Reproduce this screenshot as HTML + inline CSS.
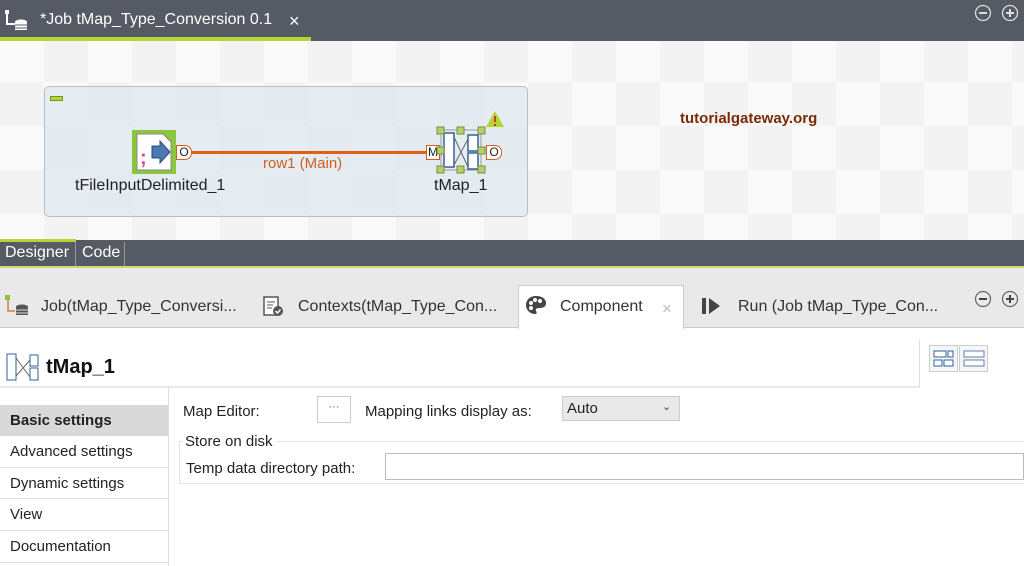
<!DOCTYPE html>
<html><head><meta charset="utf-8"><style>
*{margin:0;padding:0;box-sizing:border-box}
body{width:1024px;height:566px;overflow:hidden;background:#fff;font-family:"Liberation Sans",sans-serif;font-size:15px;color:#222;position:relative}
.a{position:absolute}
.t{position:absolute;white-space:nowrap}
</style></head><body>
<!-- top bar -->
<div class="a" style="left:0;top:0;width:1024px;height:41px;background:#555a65"></div>
<div class="a" style="left:0;top:37px;width:311px;height:4px;background:#b6d432"></div>
<svg class="a" style="left:4px;top:10px" width="26" height="22"><rect x="1" y="0" width="4" height="4" fill="#fff"/><path d="M3 4v10h8" stroke="#fff" stroke-width="2" fill="none"/><ellipse cx="17" cy="12" rx="6" ry="2.5" fill="#fff"/><rect x="11" y="12" width="12" height="8" fill="#fff"/><path d="M11 15h12M11 18h12" stroke="#555a65"/></svg>
<div class="t" style="left:40px;top:11px;color:#fff;font-size:16px">*Job tMap_Type_Conversion 0.1</div>
<div class="t" style="left:289px;top:11px;color:#fff;font-size:18px">×</div>
<svg class="a" style="left:974px;top:4px" width="46" height="18"><circle cx="9" cy="9" r="7.5" fill="none" stroke="#ddd" stroke-width="1.3"/><path d="M5 9h8" stroke="#ddd" stroke-width="2"/><circle cx="36" cy="9" r="7.5" fill="none" stroke="#ddd" stroke-width="1.3"/><path d="M32 9h8M36 5v8" stroke="#ddd" stroke-width="2"/></svg>
<!-- canvas -->
<div class="a" style="left:0;top:41px;width:1024px;height:199px;background-color:#fafafa;background-image:conic-gradient(#f3f3f3 25%,transparent 0 50%,#f3f3f3 0 75%,transparent 0);background-size:88px 88px;background-position:-44px 41px"></div>
<div class="a" style="left:44px;top:86px;width:484px;height:131px;background:rgba(220,230,238,.7);border:1px solid #b4c0cc;border-radius:5px"></div>
<div class="a" style="left:50px;top:96px;width:13px;height:5px;background:#b6d432;border:1px solid #7a9020"></div>
<!-- file input icon -->
<div class="a" style="left:132px;top:130px;width:44px;height:44px;background:#8cc63f"></div>
<svg class="a" style="left:132px;top:130px" width="60" height="44"><path d="M5 4h26l8 8v28H5z" fill="#fff" stroke="#888"/><text x="8" y="34" fill="#e040a0" font-size="20" font-weight="bold" font-family="Liberation Sans">;</text><path d="M20 16h8v-5l10 11-10 11v-5h-8z" fill="#4a7ab0" stroke="#2a4a80"/></svg>
<div class="a" style="left:176px;top:145px;width:16px;height:15px;background:#fff;border:1px solid #d06020;border-radius:0 7px 7px 0;font-size:12px;text-align:center;line-height:13px">O</div>
<div class="a" style="left:192px;top:151px;width:236px;height:3px;background:#e0601a"></div>
<div class="t" style="left:263px;top:155px;color:#d06020;font-size:15px">row1 (Main)</div>
<div class="t" style="left:75px;top:177px;font-size:16px">tFileInputDelimited_1</div>
<!-- tMap -->
<div class="a" style="left:426px;top:145px;width:14px;height:15px;background:#fff;border:1px solid #d06020;font-size:12px;text-align:center;line-height:13px">M</div>
<svg class="a" style="left:436px;top:125px" width="60" height="50"><rect x="5" y="5" width="40" height="40" fill="none" stroke="#999"/><rect x="8" y="8" width="10" height="34" fill="#fff" stroke="#3060a0" stroke-width="1.5"/><rect x="32" y="10" width="10" height="16" fill="#fff" stroke="#3060a0" stroke-width="1.5"/><rect x="32" y="28" width="10" height="16" fill="#fff" stroke="#3060a0" stroke-width="1.5"/><path d="M18 12L32 42M18 40L32 14" stroke="#666"/><g fill="#b6d070" stroke="#7a9030"><rect x="1" y="2" width="7" height="7"/><rect x="21" y="2" width="7" height="7"/><rect x="42" y="2" width="7" height="7"/><rect x="1" y="22" width="7" height="7"/><rect x="42" y="22" width="7" height="7"/><rect x="1" y="41" width="7" height="7"/><rect x="21" y="41" width="7" height="7"/><rect x="42" y="41" width="7" height="7"/></g></svg>
<div class="a" style="left:486px;top:145px;width:16px;height:15px;background:#fff;border:1px solid #d06020;border-radius:0 7px 7px 0;font-size:12px;text-align:center;line-height:13px">O</div>
<svg class="a" style="left:485px;top:110px" width="20" height="18"><path d="M10 1L19 17H1z" fill="#b6d432"/><path d="M10 6v6M10 14v2" stroke="#c04020" stroke-width="2"/></svg>
<div class="t" style="left:434px;top:177px;font-size:16px">tMap_1</div>
<div class="t" style="left:680px;top:110px;color:#7a2a0a;font-size:15px;font-weight:bold">tutorialgateway.org</div>
<!-- designer bar -->
<div class="a" style="left:0;top:240px;width:1024px;height:28px;background:#555a65"></div>
<div class="a" style="left:0;top:239px;width:76px;height:3px;background:#b6d432"></div>
<div class="a" style="left:0;top:242px;width:76px;height:24px;border-right:1px solid #999"></div>
<div class="t" style="left:5px;top:244px;color:#fff;font-size:16px">Designer</div>
<div class="a" style="left:77px;top:242px;width:48px;height:24px;border-right:1px solid #999"></div>
<div class="t" style="left:82px;top:244px;color:#fff;font-size:16px">Code</div>
<div class="a" style="left:0;top:266px;width:1024px;height:2px;background:#c8dc70"></div>
<!-- views tabs -->
<div class="a" style="left:0;top:268px;width:1024px;height:60px;background:#e9e9e9;border-bottom:1px solid #ccc"></div>
<svg class="a" style="left:5px;top:295px" width="26" height="22"><rect x="0" y="0" width="5" height="5" fill="#8cc63f"/><path d="M3 5v11h7" stroke="#d08040" stroke-width="1.5" fill="none"/><ellipse cx="17" cy="12" rx="6" ry="2.5" fill="#555"/><rect x="11" y="12" width="12" height="8" fill="#555"/><path d="M11 15h12M11 18h12" stroke="#ddd"/></svg>
<div class="t" style="left:41px;top:298px;color:#333;font-size:16px">Job(tMap_Type_Conversi...</div>
<svg class="a" style="left:262px;top:294px" width="24" height="24"><rect x="2" y="3" width="14" height="18" fill="#fff" stroke="#555" stroke-width="1.5"/><path d="M5 8h8M5 11h6M5 14h5" stroke="#555"/><circle cx="16" cy="17" r="5" fill="#555"/><path d="M13.5 17l2 2 3-3.5" stroke="#fff" stroke-width="1.5" fill="none"/></svg>
<div class="t" style="left:298px;top:298px;color:#333;font-size:16px">Contexts(tMap_Type_Con...</div>
<div class="a" style="left:518px;top:285px;width:166px;height:44px;background:#fff;border:1px solid #ccc;border-bottom:none"></div>
<svg class="a" style="left:525px;top:295px" width="22" height="20"><path d="M11 1C4 1 1 6 1 10c0 5 4 9 9 9 2 0 2-2 1-3-1-2 1-3 3-3 4 0 7-1 7-5S17 1 11 1z" fill="#444"/><circle cx="6" cy="8" r="2" fill="#fff"/><circle cx="10" cy="5" r="2" fill="#fff"/><circle cx="15" cy="6" r="2" fill="#fff"/><circle cx="6" cy="13" r="2" fill="#fff"/></svg>
<div class="t" style="left:560px;top:298px;color:#333;font-size:16px">Component</div>
<div class="t" style="left:662px;top:299px;color:#bbb;font-size:17px">×</div>
<svg class="a" style="left:700px;top:297px" width="22" height="18"><rect x="2" y="1" width="4" height="16" fill="#444"/><path d="M9 1l11 8-11 8z" fill="#444"/></svg>
<div class="t" style="left:738px;top:298px;color:#333;font-size:16px">Run (Job tMap_Type_Con...</div>
<svg class="a" style="left:974px;top:290px" width="46" height="18"><circle cx="9" cy="9" r="7.5" fill="none" stroke="#666" stroke-width="1.2"/><path d="M5 9h8" stroke="#444" stroke-width="2"/><circle cx="36" cy="9" r="7.5" fill="none" stroke="#666" stroke-width="1.2"/><path d="M32 9h8M36 5v8" stroke="#444" stroke-width="2"/></svg>
<!-- header -->
<div class="a" style="left:0;top:340px;width:920px;height:48px;border-right:1px solid #ddd;border-bottom:2px solid #e4eaf0"></div>
<svg class="a" style="left:6px;top:352px" width="34" height="30"><rect x="1" y="2" width="9" height="26" fill="#fff" stroke="#3060a0"/><rect x="24" y="3" width="8" height="11" fill="#fff" stroke="#3060a0"/><rect x="24" y="16" width="8" height="12" fill="#fff" stroke="#3060a0"/><path d="M10 6L24 25M10 24L24 8" stroke="#666"/></svg>
<div class="t" style="left:46px;top:356px;font-size:20px;font-weight:bold;color:#111">tMap_1</div>
<div class="a" style="left:929px;top:345px;width:29px;height:27px;border:1px solid #ccc;background:#f6f6f6"></div>
<svg class="a" style="left:933px;top:349px" width="22" height="20"><rect x="1" y="2" width="12" height="6" fill="#fff" stroke="#3060a0"/><rect x="15" y="2" width="5" height="6" fill="#fff" stroke="#3060a0"/><rect x="1" y="11" width="8" height="6" fill="#fff" stroke="#3060a0"/><rect x="11" y="11" width="9" height="6" fill="#fff" stroke="#3060a0"/></svg>
<div class="a" style="left:959px;top:345px;width:29px;height:27px;border:1px solid #ccc;background:#f6f6f6"></div>
<svg class="a" style="left:963px;top:349px" width="22" height="20"><rect x="1" y="2" width="20" height="6" fill="#fff" stroke="#6080b0"/><rect x="1" y="11" width="20" height="6" fill="#fff" stroke="#6080b0"/></svg>
<!-- left list -->
<div class="a" style="left:168px;top:388px;width:1px;height:178px;background:#ddd"></div>
<div class="a" style="left:0;top:405px;width:168px;height:31px;background:#d9d9d9"></div>
<div class="t" style="left:10px;top:412px;font-weight:bold;font-size:15px">Basic settings</div>
<div class="a" style="left:0;top:467px;width:168px;height:1px;background:#e0e0e0"></div>
<div class="a" style="left:0;top:498px;width:168px;height:1px;background:#e0e0e0"></div>
<div class="a" style="left:0;top:530px;width:168px;height:1px;background:#e0e0e0"></div>
<div class="a" style="left:0;top:562px;width:168px;height:1px;background:#e0e0e0"></div>
<div class="t" style="left:10px;top:443px">Advanced settings</div>
<div class="t" style="left:10px;top:475px">Dynamic settings</div>
<div class="t" style="left:10px;top:506px">View</div>
<div class="t" style="left:10px;top:538px">Documentation</div>
<!-- form -->
<div class="t" style="left:183px;top:403px">Map Editor:</div>
<div class="a" style="left:317px;top:396px;width:34px;height:27px;border:1px solid #ccc;background:#fff;text-align:center;font-size:11px;line-height:20px;color:#555">···</div>
<div class="t" style="left:365px;top:403px">Mapping links display as:</div>
<div class="a" style="left:562px;top:396px;width:118px;height:25px;border:1px solid #ccc;background:#e9e9e9"></div>
<div class="t" style="left:567px;top:400px">Auto</div>
<div class="t" style="left:662px;top:400px;font-size:11px;color:#444">⌄</div>
<div class="a" style="left:179px;top:441px;width:845px;height:43px;border:1px solid #e4e4e4;border-right:none"></div>
<div class="t" style="left:183px;top:433px;background:#fff;padding:0 3px 0 2px">Store on disk</div>
<div class="t" style="left:186px;top:460px">Temp data directory path:</div>
<div class="a" style="left:385px;top:453px;width:639px;height:27px;border:1px solid #bbb;background:#fff"></div>
</body></html>
